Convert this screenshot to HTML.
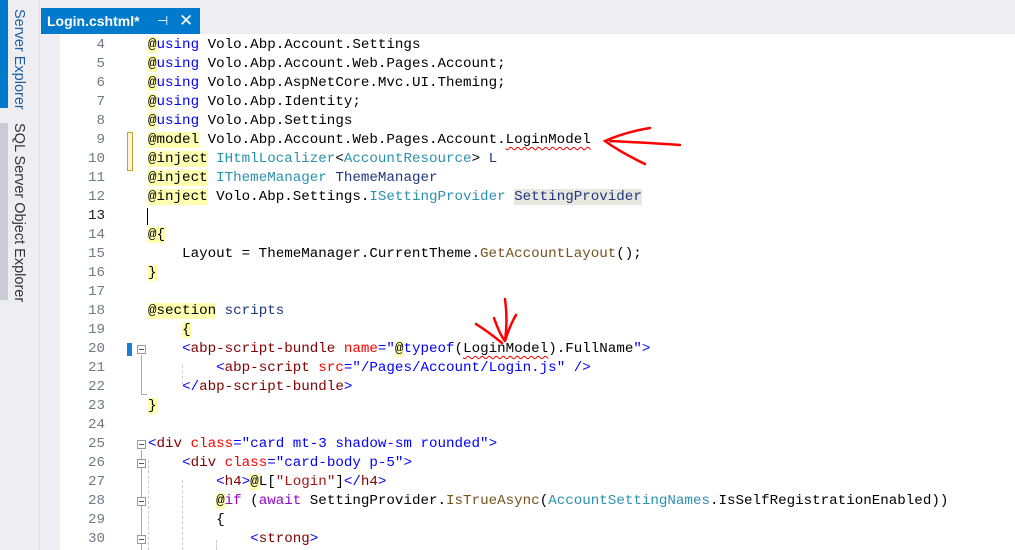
<!DOCTYPE html>
<html><head><meta charset="utf-8"><style>
body{margin:0;width:1015px;height:550px;overflow:hidden;background:#eeeef2;position:relative;font-family:"Liberation Sans",sans-serif}
.ed{position:absolute;left:41px;top:34px;width:974px;height:516px;background:#fff}
.gut{position:absolute;left:41px;top:34px;width:19px;height:516px;background:#eeeef2}
.tab{position:absolute;left:41px;top:8px;width:159px;height:26px;background:#007acc;color:#fff;font-weight:bold;font-size:14px;line-height:26px}
.ln{position:absolute;left:60px;width:45px;text-align:right;font:14.2px/19px "Liberation Mono",monospace;color:#6f7a85;margin-top:1px}
.c{position:absolute;left:148px;font:14.2px/19px "Liberation Mono",monospace;color:#000;white-space:pre;margin-top:1px}
.r{background:#ffffb0}.k{color:#0000ff}.t{color:#2b91af}.n{color:#1f377f}.m{color:#74531f}.p{color:#8f08c4}.tg{color:#800000}.a{color:#ff0000}.s{color:#0000ff}.q{color:#a31515}
.sq{text-decoration:underline wavy #e00;text-decoration-thickness:1px;text-underline-offset:3px}
.box{position:absolute;width:7px;height:7px;border:1px solid #999;background:#fff;left:137px}
.box:after{content:"";position:absolute;left:1px;right:1px;top:3px;height:1px;background:#555}
.vl{position:absolute;border-left:1px solid #aaa;left:141px}
.dl{position:absolute;border-left:1px dashed #ccc}
.vt{position:absolute;writing-mode:vertical-rl;font-size:14.5px;white-space:nowrap}
</style></head><body>
<div style="position:absolute;left:0;top:0;width:8px;height:108px;background:#007acc"></div>
<div style="position:absolute;left:0;top:123px;width:8px;height:177px;background:#c9cbd6"></div>
<div class="vt" style="left:11px;top:9px;color:#1e5fa0">Server Explorer</div>
<div class="vt" style="left:11px;top:123px;color:#333">SQL Server Object Explorer</div>
<div style="position:absolute;left:39px;top:0;width:1px;height:550px;background:#e0e0e6"></div>
<div class="ed"></div><div class="gut"></div>
<div class="tab"><span style="margin-left:6px">Login.cshtml*</span><span style="position:absolute;left:116px;font-weight:normal;font-size:13px">⊣</span><span style="position:absolute;left:138px;font-weight:normal;font-size:17px">✕</span></div>
<div style="position:absolute;left:127px;top:132px;width:4px;height:37px;border:1px solid #c8a030;background:#fff6d0"></div>
<div style="position:absolute;left:147px;top:208px;width:1px;height:17px;background:#000"></div>
<div style="position:absolute;left:127px;top:343px;width:5px;height:13px;background:#1a7fd0"></div>
<div class="box" style="top:345px"></div><div class="vl" style="top:355px;height:40px"></div><div style="position:absolute;left:141px;top:394px;width:6px;border-top:1px solid #aaa"></div>
<div class="box" style="top:440px"></div><div class="vl" style="top:450px;height:100px"></div>
<div class="box" style="top:459px"></div><div class="box" style="top:497px"></div><div class="box" style="top:535px"></div>
<div class="dl" style="left:148px;top:460px;height:90px"></div>
<div class="dl" style="left:182px;top:480px;height:70px"></div>
<div class="dl" style="left:216px;top:540px;height:10px"></div>
<div class="dl" style="left:182px;top:365px;height:19px"></div>
<svg style="position:absolute;left:0;top:0" width="1015" height="550"><g fill="none" stroke="#f00" stroke-width="2.5" stroke-linecap="round"><path d="M650 128 Q625 132 605 141 Q620 152 645 164"/><path d="M610 141 Q650 143 680 145"/><path d="M505 299 Q508 320 505 341 M494 318 Q500 335 505 341 M505 341 Q510 325 516 315"/><path d="M476 324 Q490 333 502 343"/></g></svg>
<div class="ln" style="top:35px">4</div><div class="ln" style="top:54px">5</div><div class="ln" style="top:73px">6</div><div class="ln" style="top:92px">7</div><div class="ln" style="top:111px">8</div><div class="ln" style="top:130px">9</div><div class="ln" style="top:149px">10</div><div class="ln" style="top:168px">11</div><div class="ln" style="top:187px">12</div><div class="ln" style="top:206px;color:#1a1a1a">13</div><div class="ln" style="top:225px">14</div><div class="ln" style="top:244px">15</div><div class="ln" style="top:263px">16</div><div class="ln" style="top:282px">17</div><div class="ln" style="top:301px">18</div><div class="ln" style="top:320px">19</div><div class="ln" style="top:339px">20</div><div class="ln" style="top:358px">21</div><div class="ln" style="top:377px">22</div><div class="ln" style="top:396px">23</div><div class="ln" style="top:415px">24</div><div class="ln" style="top:434px">25</div><div class="ln" style="top:453px">26</div><div class="ln" style="top:472px">27</div><div class="ln" style="top:491px">28</div><div class="ln" style="top:510px">29</div><div class="ln" style="top:529px">30</div>
<div class="c" style="top:35px"><span class="r">@</span><span class="k">using</span> Volo.Abp.Account.Settings</div>
<div class="c" style="top:54px"><span class="r">@</span><span class="k">using</span> Volo.Abp.Account.Web.Pages.Account;</div>
<div class="c" style="top:73px"><span class="r">@</span><span class="k">using</span> Volo.Abp.AspNetCore.Mvc.UI.Theming;</div>
<div class="c" style="top:92px"><span class="r">@</span><span class="k">using</span> Volo.Abp.Identity;</div>
<div class="c" style="top:111px"><span class="r">@</span><span class="k">using</span> Volo.Abp.Settings</div>
<div class="c" style="top:130px"><span class="r">@model</span> Volo.Abp.Account.Web.Pages.Account.<span class="sq">LoginModel</span></div>
<div class="c" style="top:149px"><span class="r">@inject</span> <span class="t">IHtmlLocalizer</span>&lt;<span class="t">AccountResource</span>&gt; <span class="n">L</span></div>
<div class="c" style="top:168px"><span class="r">@inject</span> <span class="t">IThemeManager</span> <span class="n">ThemeManager</span></div>
<div class="c" style="top:187px"><span class="r">@inject</span> Volo.Abp.Settings.<span class="t">ISettingProvider</span> <span class="n" style="background:#e8e8e0">SettingProvider</span></div>
<div class="c" style="top:225px"><span class="r">@{</span></div>
<div class="c" style="top:244px">    Layout = ThemeManager.CurrentTheme.<span class="m">GetAccountLayout</span>();</div>
<div class="c" style="top:263px"><span class="r">}</span></div>
<div class="c" style="top:301px"><span class="r">@section</span> <span class="n">scripts</span></div>
<div class="c" style="top:320px">    <span class="r">{</span></div>
<div class="c" style="top:339px">    <span class="k">&lt;</span><span class="tg">abp-script-bundle</span> <span class="a">name</span><span class="k">="</span><span class="r">@</span><span class="k">typeof</span>(<span class="sq">LoginModel</span>).FullName<span class="k">"&gt;</span></div>
<div class="c" style="top:358px">        <span class="k">&lt;</span><span class="tg">abp-script</span> <span class="a">src</span><span class="k">="/Pages/Account/Login.js" /&gt;</span></div>
<div class="c" style="top:377px">    <span class="k">&lt;/</span><span class="tg">abp-script-bundle</span><span class="k">&gt;</span></div>
<div class="c" style="top:396px"><span class="r">}</span></div>
<div class="c" style="top:434px"><span class="k">&lt;</span><span class="tg">div</span> <span class="a">class</span><span class="k">="card mt-3 shadow-sm rounded"&gt;</span></div>
<div class="c" style="top:453px">    <span class="k">&lt;</span><span class="tg">div</span> <span class="a">class</span><span class="k">="card-body p-5"&gt;</span></div>
<div class="c" style="top:472px">        <span class="k">&lt;</span><span class="tg">h4</span><span class="k">&gt;</span><span class="r">@</span>L[<span class="q">"Login"</span>]<span class="k">&lt;/</span><span class="tg">h4</span><span class="k">&gt;</span></div>
<div class="c" style="top:491px">        <span class="r">@</span><span class="p">if</span> (<span class="p">await</span> SettingProvider.<span class="m">IsTrueAsync</span>(<span class="t">AccountSettingNames</span>.IsSelfRegistrationEnabled))</div>
<div class="c" style="top:510px">        {</div>
<div class="c" style="top:529px">            <span class="k">&lt;</span><span class="tg">strong</span><span class="k">&gt;</span></div>
</body></html>
